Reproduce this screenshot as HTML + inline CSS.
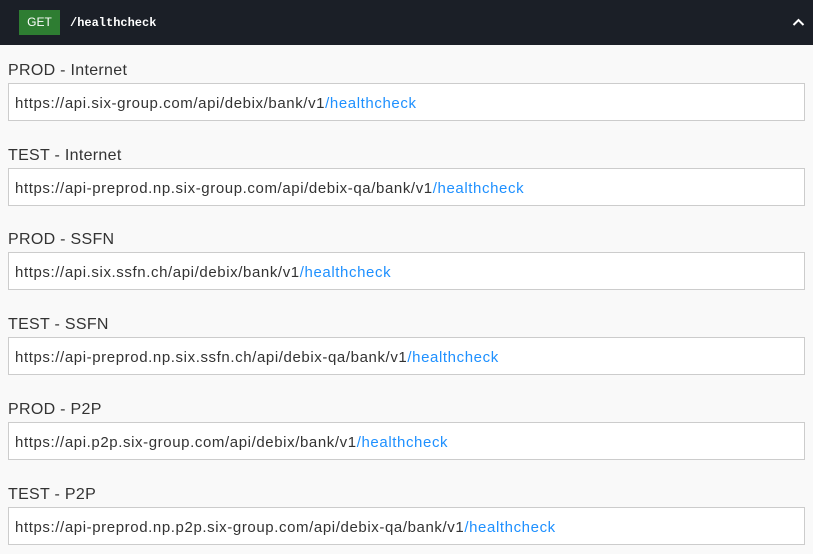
<!DOCTYPE html>
<html><head><style>
body{margin:0;width:813px;height:554px;background:#f9f9f9;font-family:"Liberation Sans",sans-serif;overflow:hidden;position:relative}
.hd{position:absolute;left:0;top:0;width:813px;height:45px;background:#1b1f27}
.get{position:absolute;left:19px;top:10px;width:41px;height:25px;background:#2e7d32;color:#fff;font-size:12px;line-height:25px;text-align:center}
.path{position:absolute;left:70px;top:16px;color:#fff;font:bold 12px "Liberation Mono",monospace}
.lab{position:absolute;left:8px;font-size:16px;color:#333;letter-spacing:0.3px}
.box{position:absolute;left:8px;width:795px;height:36px;background:#fff;border:1px solid #ccc;font-size:15px;letter-spacing:0.6px;color:#333;line-height:39px;text-indent:6px;white-space:nowrap;overflow:hidden}
.box span{color:#1e90ff}
</style></head><body>
<div class="hd"><div class="get">GET</div><div class="path">/healthcheck</div>
<svg style="position:absolute;left:792px;top:17px" width="13" height="10"><path d="M1.5 8 L6.5 3 L11.5 8" stroke="#fff" stroke-width="2" fill="none"/></svg></div>
<div class="lab" style="top:62px">PROD - Internet</div>
<div class="box" style="top:83px">https://api.six-group.com/api/debix/bank/v1<span>/healthcheck</span></div>
<div class="lab" style="top:147px">TEST - Internet</div>
<div class="box" style="top:168px">https://api-preprod.np.six-group.com/api/debix-qa/bank/v1<span>/healthcheck</span></div>
<div class="lab" style="top:231px">PROD - SSFN</div>
<div class="box" style="top:252px">https://api.six.ssfn.ch/api/debix/bank/v1<span>/healthcheck</span></div>
<div class="lab" style="top:316px">TEST - SSFN</div>
<div class="box" style="top:337px">https://api-preprod.np.six.ssfn.ch/api/debix-qa/bank/v1<span>/healthcheck</span></div>
<div class="lab" style="top:401px">PROD - P2P</div>
<div class="box" style="top:422px">https://api.p2p.six-group.com/api/debix/bank/v1<span>/healthcheck</span></div>
<div class="lab" style="top:486px">TEST - P2P</div>
<div class="box" style="top:507px">https://api-preprod.np.p2p.six-group.com/api/debix-qa/bank/v1<span>/healthcheck</span></div>
</body></html>
